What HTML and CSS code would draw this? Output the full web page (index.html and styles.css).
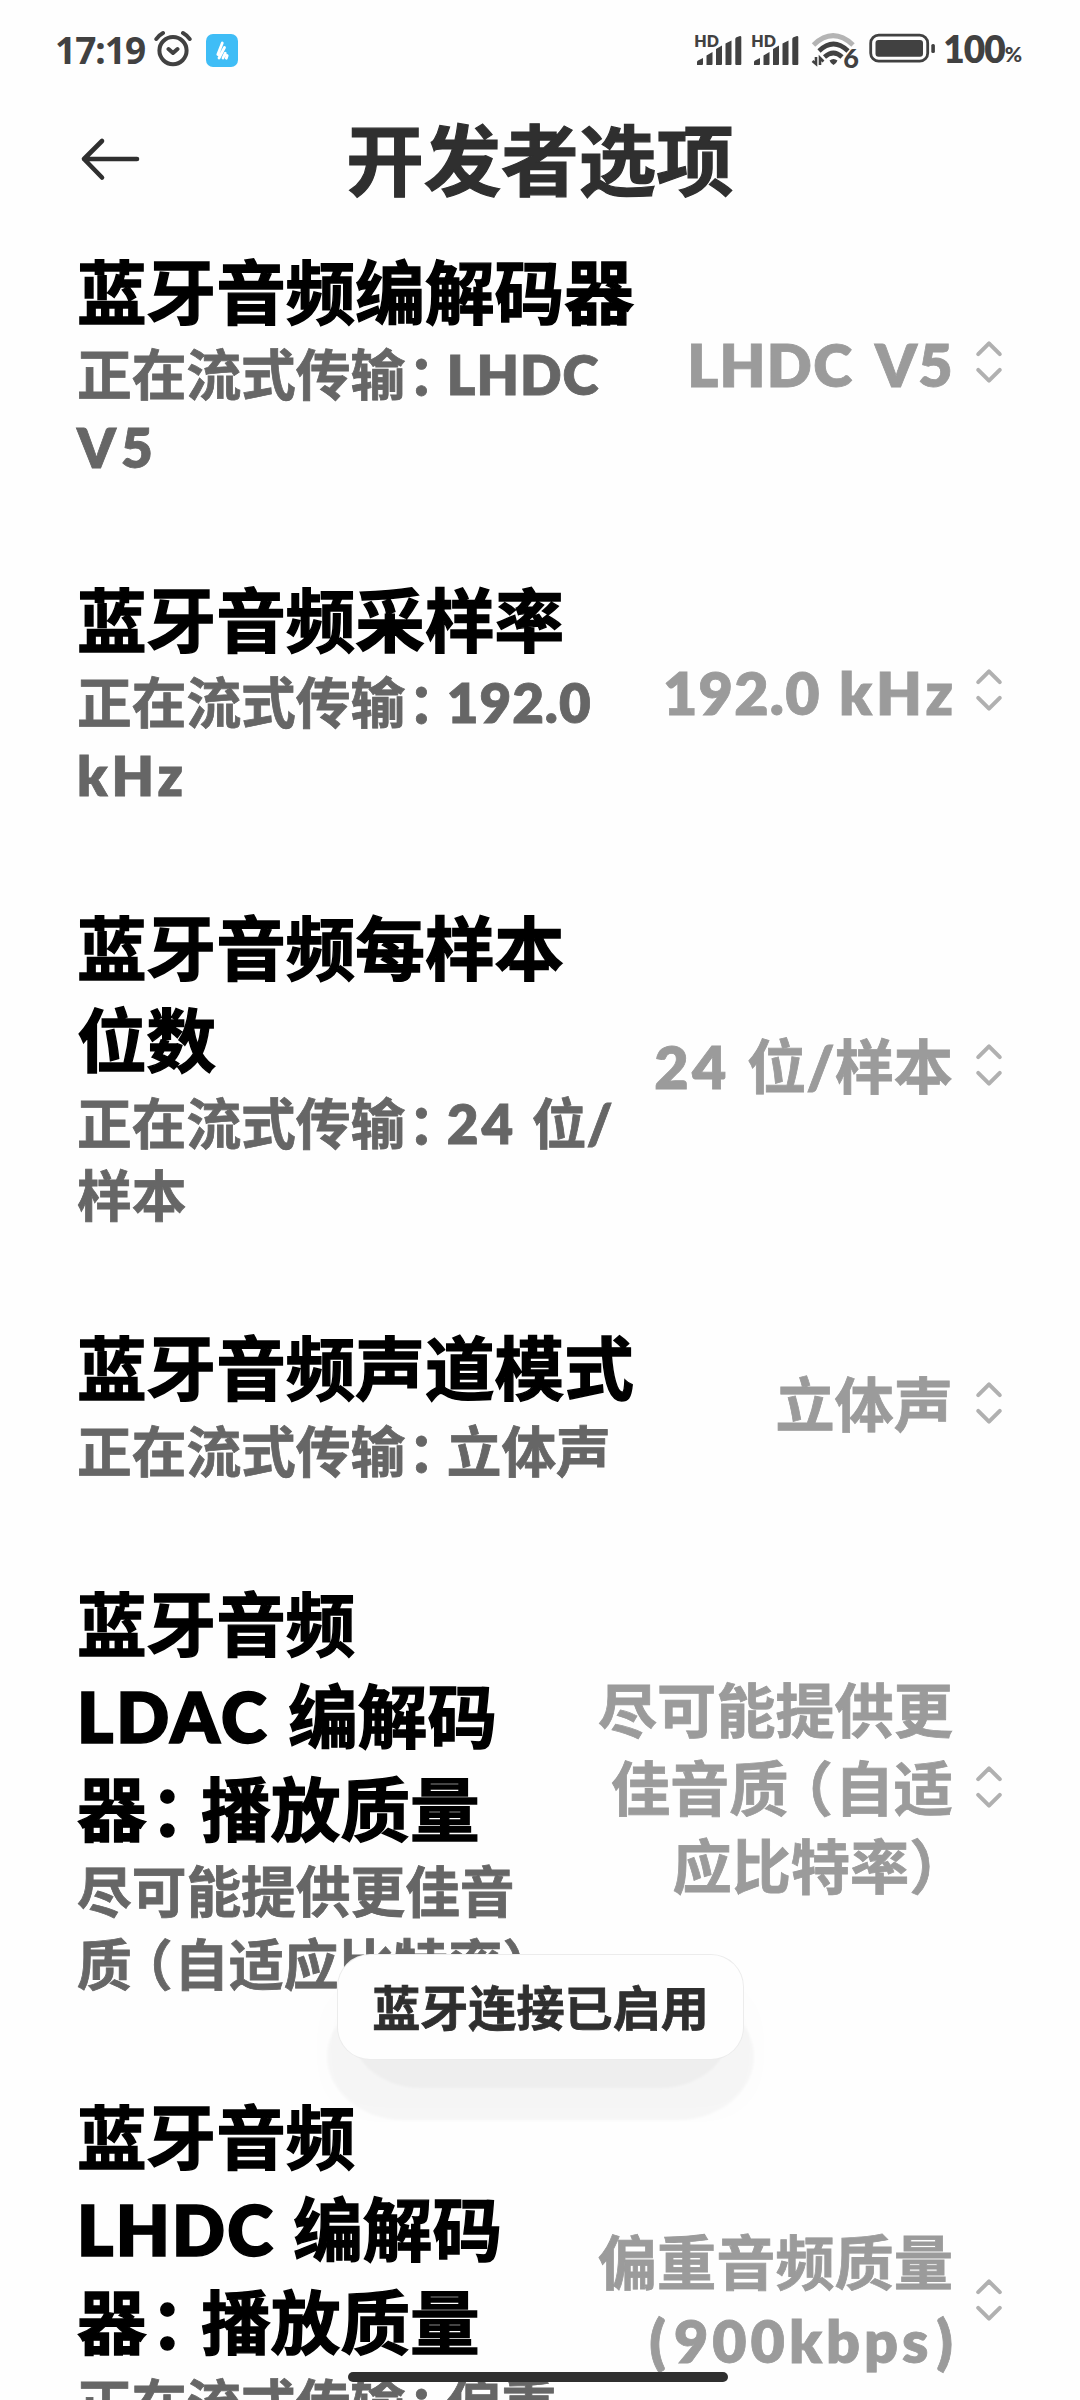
FILE: index.html
```html
<!DOCTYPE html>
<html lang="zh-CN">
<head>
<meta charset="utf-8">
<title>开发者选项</title>
<link rel="stylesheet" href="styles.css">
</head>
<body>
<svg class="defs" width="0" height="0">
  <symbol id="updown" viewBox="0 0 28 44">
    <path d="M3.2 14.2 14 3.4 24.8 14.2M3.2 29.8 14 40.6 24.8 29.8" fill="none" stroke="#b0b0b0" stroke-width="4" stroke-linecap="round" stroke-linejoin="round"/>
  </symbol>
  <symbol id="bars" viewBox="0 0 46 30">
    <path d="M1 29V26Q1 25 2 24.500L7 22V28Q7 29 6 29ZM10.500 29V19.500L16.500 16V28Q16.500 29 15.500 29ZM20 29V13L26 9.500V28Q26 29 25 29ZM29.500 29V7.500L35.500 4.500V28Q35.500 29 34.500 29ZM39.300 28V3Q39.300 1.800 40.500 1.300L44 0Q45.300 0 45.300 1V28Q45.300 29 44.300 29H40.300Q39.300 29 39.300 28Z" fill="#414141"/>
  </symbol>
</svg>
<div class="screen">
  <div class="status">
    <span class="clock">17:19</span>
    <svg class="alarm" width="38" height="38" viewBox="0 0 38 38" fill="none" stroke="#414141" stroke-width="4" stroke-linecap="round" stroke-linejoin="round"><circle cx="19" cy="20.600" r="13.600"/><path d="M14.500 19 19 23 23.500 19M2.300 9Q4.500 5.500 9 3M35.700 9Q33.500 5.500 29 3"/></svg>
    <svg class="app" width="32" height="33" viewBox="0 0 32 33"><rect width="32" height="33" rx="7" fill="#3fbdf6"/><path d="M11.800 20.500 16.300 9M13 24 18.500 13.500M17 24 19.300 19.200M20.300 24.200 21.200 21.500" stroke="#fff" stroke-width="2.800" stroke-linecap="round"/></svg>
    <div class="signals">
      <div class="signal"><span class="hd">HD</span><svg width="46" height="30"><use href="#bars"/></svg></div>
      <div class="signal"><span class="hd">HD</span><svg width="46" height="30"><use href="#bars"/></svg></div>
      <div class="wifi">
        <svg width="46" height="38" viewBox="0 0 46 38" fill="none"><path d="M2.500 12Q22 -6.500 42 12" stroke="#b4b4b4" stroke-width="5"/><path d="M8 18Q22.500 4 37 18M13.500 24Q22.500 16 31 24" stroke="#414141" stroke-width="4.600"/><path d="M18.500 27.500Q22.500 24.500 26.500 27.500Q26 29.500 22.500 32Q19 29.500 18.500 27.500Z" fill="#414141"/><path d="M5 24V31L1.500 28M9 32V25L12.500 28.500" stroke="#414141" stroke-width="2.600"/></svg>
        <span class="gen">6</span>
      </div>
      <svg class="battery" width="68" height="30" viewBox="0 0 68 30"><rect x="1.700" y="2.200" width="57" height="26" rx="8" fill="none" stroke="#414141" stroke-width="2.800"/><rect x="6.500" y="7" width="47.500" height="16.700" rx="3" fill="#414141"/><rect x="62.300" y="11" width="3.600" height="9" rx="1.600" fill="#414141"/></svg>
      <span class="level">100</span><span class="percent">%</span>
    </div>
  </div>
  <header class="header">
    <svg class="back" width="60" height="44" viewBox="0 0 60 44" fill="none" stroke="#2f2f2f" stroke-width="4.600" stroke-linecap="round" stroke-linejoin="round"><path d="M57 22H4M22 4 4 22 22 40.500"/></svg>
    <h1>开发者选项</h1>
  </header>
  <main class="list">
    <section class="row">
      <div class="info"><h2>蓝牙音频编解码器</h2><p>正在流式传输<i class="colon">：</i><b class="lat s-lhdc">LHDC</b><br><b class="lat s-v5">V5</b></p></div>
      <div class="value"><b class="lat v-lhdc">LHDC V5</b></div>
      <svg class="chev" width="28" height="44"><use href="#updown"/></svg>
    </section>
    <section class="row">
      <div class="info"><h2>蓝牙音频采样率</h2><p>正在流式传输<i class="colon">：</i><b class="lat s-rate">192.0</b><br><b class="lat s-khz">kHz</b></p></div>
      <div class="value"><b class="lat v-rate">192.0 </b><b class="lat v-khz">kHz</b></div>
      <svg class="chev" width="28" height="44"><use href="#updown"/></svg>
    </section>
    <section class="row">
      <div class="info"><h2>蓝牙音频每样本<br>位数</h2><p>正在流式传输<i class="colon">：</i><b class="lat s-bits">24 </b>位<b class="lat">/</b><br>样本</p></div>
      <div class="value"><b class="lat v-bits">24 </b>位<b class="lat">/</b>样本</div>
      <svg class="chev" width="28" height="44"><use href="#updown"/></svg>
    </section>
    <section class="row">
      <div class="info"><h2>蓝牙音频声道模式</h2><p>正在流式传输<i class="colon">：</i>立体声</p></div>
      <div class="value">立体声</div>
      <svg class="chev" width="28" height="44"><use href="#updown"/></svg>
    </section>
    <section class="row">
      <div class="info"><h2>蓝牙音频<br><b class="lat t-ldac">LDAC </b>编解码<br>器<i class="colon">：</i>播放质量</h2><p>尽可能提供更佳音<br>质<i class="open">（</i>自适应比特率<i class="close">）</i></p></div>
      <div class="value">尽可能提供更<br>佳音质<i class="open">（</i>自适<br>应比特率<i class="close">）</i></div>
      <svg class="chev" width="28" height="44"><use href="#updown"/></svg>
    </section>
    <section class="row">
      <div class="info"><h2>蓝牙音频<br><b class="lat t-lhdc">LHDC </b>编解码<br>器<i class="colon">：</i>播放质量</h2><p>正在流式传输<i class="colon">：</i>偏重<br>音频质量</p></div>
      <div class="value">偏重音频质量<br><b class="lat v-paren">(</b><b class="lat v-kbps">900kbps</b><b class="lat">)</b></div>
      <svg class="chev" width="28" height="44"><use href="#updown"/></svg>
    </section>
  </main>
  <div class="toast"><span>蓝牙连接已启用</span></div>
  <div class="homebar"></div>
</div>
</body>
</html>
```
FILE: styles.css
```css
* { box-sizing: border-box; }
body { margin: 0; background: #fefefe; }
.defs { position: absolute; }
.screen {
  position: relative;
  width: 1080px;
  height: 2400px;
  overflow: hidden;
  display: flex;
  flex-direction: column;
  font-family: "Noto Sans CJK SC", sans-serif;
  font-weight: 700;
}
h1, h2, p { margin: 0; font-weight: 700; white-space: nowrap; }
i { font-style: normal; }

/* status bar */
.status {
  flex: none;
  height: 100px;
  padding: 0 58px 0 55px;
  display: flex;
  align-items: center;
  color: #414141;
  font-family: "Noto Sans", sans-serif;
}
.clock { font-size: 37px; line-height: 40px; letter-spacing: -1px; width: 99px; margin-top: 0; white-space: nowrap; }
.alarm { flex: none; margin-bottom: 2px; }
.app { flex: none; margin-left: 14px; }
.signals { margin-left: auto; display: flex; align-items: center; }
.signal { width: 57px; height: 34px; position: relative; display: flex; align-items: flex-end; padding-left: 1px; margin-top: -3px; }
.hd { position: absolute; left: -1px; top: 1px; font: 800 16px/15px "Lato", sans-serif; }
.wifi { width: 58px; height: 38px; position: relative; margin: 3px 0 0 2px; }
.gen { position: absolute; left: 32px; top: 12px; font: 900 27px/25px "Lato", sans-serif; }
.battery { flex: none; margin: -5px 0 0; }
.level { font: 800 37px/40px "Lato", sans-serif; letter-spacing: -1px; margin: -2px 0 0 6px; }
.percent { font: 900 21px/20px "Lato", sans-serif; margin-top: 7px; }

/* title bar */
.header { flex: none; height: 100px; position: relative; display: flex; align-items: center; justify-content: center; }
.back { position: absolute; left: 80px; top: 37px; }
.header h1 { font-size: 77.500px; line-height: 100px; color: #2f2f2f; margin-top: 12px; -webkit-text-stroke: 1.200px; }

/* preference list */
.row { display: flex; align-items: center; padding: 42.500px 77px 48px; }
.info { flex: 1; min-width: 0; }
.info h2 { font-size: 69.600px; line-height: 92.500px; color: #000; -webkit-text-stroke: 1.400px; }
.info p { font-size: 54.700px; line-height: 72.500px; color: #666; margin: 1px 0 -1px; -webkit-text-stroke: .8px; }
.value { flex: none; font-size: 59.200px; line-height: 78.400px; color: #9b9b9b; text-align: right; white-space: nowrap; margin-top: -1px; -webkit-text-stroke: .8px; }
.chev { flex: none; margin: 2px 0 0 22px; }
.lat { font-family: "Lato", sans-serif; font-weight: 800; line-height: 1; white-space: pre; }
.s-lhdc { letter-spacing: 1px; }
.s-v5 { letter-spacing: 5px; }
.s-rate { letter-spacing: 1px; }
.s-khz { letter-spacing: 4px; }
.s-bits { letter-spacing: 3px; }
.v-lhdc { letter-spacing: 1.300px; word-spacing: 9px; margin-right: -1px; }
.v-rate { letter-spacing: 1.300px; word-spacing: 3px; }
.v-khz { letter-spacing: 4px; margin-right: -4px; }
.v-bits { letter-spacing: 3.500px; }
.t-ldac { letter-spacing: 2.800px; }
.t-lhdc { letter-spacing: 2.200px; }
.v-kbps { letter-spacing: 4px; margin-right: 4px; }
.v-paren { margin-right: 8px; }
.colon, .open, .close { display: inline-block; height: 1em; line-height: 1em; text-align: left; }
.colon { width: .76em; text-indent: .05em; }
h2 .colon { width: .785em; }
.open { width: .78em; text-indent: -.25em; }
.close { width: .74em; }

/* toast */
.toast {
  position: absolute;
  left: 338px;
  top: 1955px;
  width: 405px;
  height: 104px;
  display: flex;
  align-items: center;
  justify-content: center;
  isolation: isolate;
  font-size: 48.100px;
  line-height: 64px;
  color: #2f2f2f;
  white-space: nowrap;
}
.toast span {
  flex: 1;
  height: 104px;
  line-height: 101px;
  text-align: center;
  background: #fefefe;
  border-radius: 32px;
  -webkit-text-stroke: .8px;
  box-shadow: 0 0 0 1px #ececec, 0 42px 34px 14px rgba(60, 50, 60, .012);
}
.toast::before, .toast::after { content: ""; position: absolute; z-index: -1; }
.toast::before { left: -11px; right: -11px; top: 38px; bottom: -61px; border-radius: 84px / 70px; background: rgba(0, 0, 0, .028); filter: blur(1px); }
.toast::after { left: 14px; right: 14px; top: 20px; bottom: -29px; border-radius: 68px / 56px; background: rgba(0, 0, 0, .026); filter: blur(1px); }
.homebar { position: absolute; left: 348px; top: 2372px; width: 380px; height: 10px; border-radius: 5px; background: #2f2f2f; }
```
